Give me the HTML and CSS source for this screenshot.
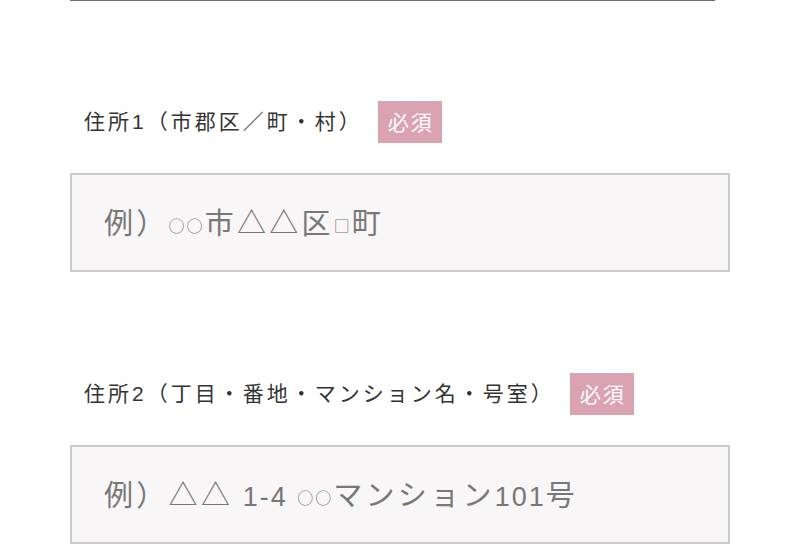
FILE: index.html
```html
<!DOCTYPE html>
<html lang="ja">
<head>
<meta charset="utf-8">
<link rel="stylesheet" href="styles.css">
</head>
<body>
<div class="divider"></div>
<div class="field field-first">
  <div class="label-row">
    <span class="label">住所1（市郡区／町・村）</span>
    <span class="badge">必須</span>
  </div>
  <div class="input"><span class="placeholder">例）<span class="sym">○○</span>市△△区<span class="sym">□</span>町</span></div>
</div>
<div class="field">
  <div class="label-row">
    <span class="label">住所2（丁目・番地・マンション名・号室）</span>
    <span class="badge">必須</span>
  </div>
  <div class="input"><span class="placeholder">例）△△<span class="num"> 1-4 </span><span class="sym">○○</span>マンション<span class="num">101</span>号</span></div>
</div>
</body>
</html>
```
FILE: styles.css
```css
html, body {
  margin: 0;
  padding: 0;
  background: #fff;
  font-family: "Liberation Sans", "Noto Sans CJK JP", sans-serif;
}
.divider {
  margin-left: 70px;
  width: 645px;
  height: 1px;
  background: #6e6e6e;
}
.field {
  margin: 0 70px;
  padding-top: 101px;
}
.field-first {
  padding-top: 100px;
}
.label-row {
  display: flex;
  align-items: center;
  height: 42px;
  padding-left: 14px;
}
.label {
  font-size: 21px;
  letter-spacing: 3px;
  color: #333;
  padding-bottom: 5px;
}
.badge {
  display: flex;
  align-items: center;
  justify-content: center;
  box-sizing: border-box;
  width: 64px;
  height: 42px;
  margin-left: 15px;
  padding-bottom: 3px;
  background: #dba2b1;
  color: #fff;
  font-size: 21px;
  letter-spacing: 2px;
  text-indent: 2px;
}
.input {
  margin-top: 30px;
  height: 91px;
  border: 2px solid #cbcbcb;
  background: #f9f6f7;
  padding-left: 32px;
  padding-bottom: 4px;
  display: flex;
  align-items: center;
  font-size: 29px;
  letter-spacing: 3.3px;
  color: #777;
}
.placeholder {
  white-space: pre;
}
.num {
  font-size: 27px;
  letter-spacing: 2px;
}
.sym {
  font-size: 16px;
  letter-spacing: 2px;
  vertical-align: 2px;
  font-family: "Noto Sans CJK JP", sans-serif;
}
```
